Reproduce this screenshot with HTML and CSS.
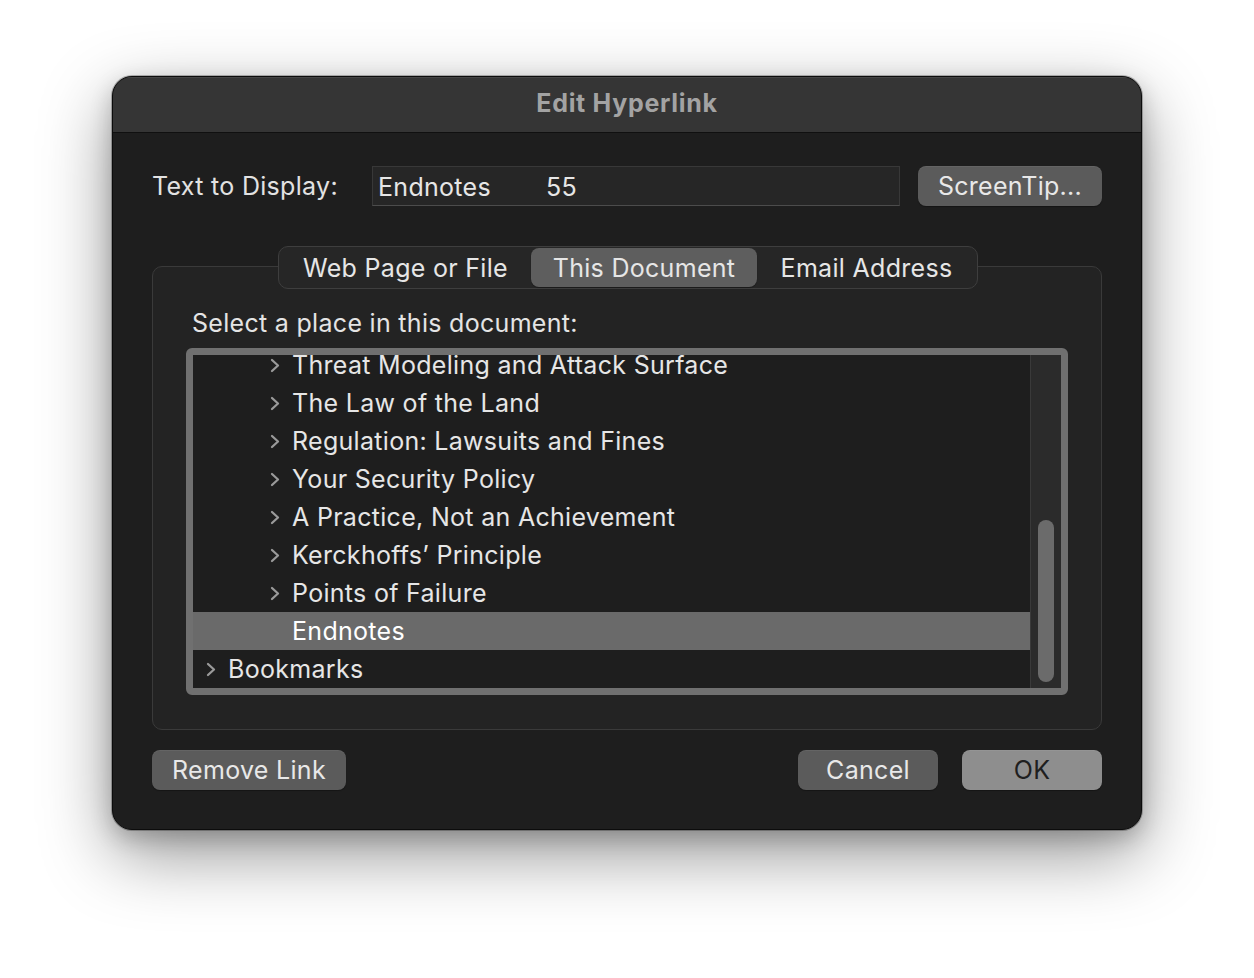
FILE: index.html
```html
<!DOCTYPE html>
<html lang="en">
<head>
<meta charset="utf-8">
<title>Edit Hyperlink</title>
<link rel="stylesheet" href="styles.css">
</head>
<body>
<div class="dialog">
  <div class="titlebar">Edit Hyperlink</div>
  <div class="content">
    <div class="display-row">
      <label class="display-label">Text to Display:</label>
      <div class="field"><span class="field-word">Endnotes</span><span class="field-num">55</span></div>
      <button class="btn screentip">ScreenTip...</button>
    </div>

    <div class="tabs">
      <div class="tab">Web Page or File</div>
      <div class="tab active">This Document</div>
      <div class="tab">Email Address</div>
    </div>

    <div class="group">
      <div class="group-label">Select a place in this document:</div>
      <div class="listbox">
        <div class="rows">
          <div class="rows-inner">
            <div class="row lvl1"><svg class="chev" viewBox="0 0 10 14"><polyline points="2,1.5 8,7 2,12.5"/></svg><span>Threat Modeling and Attack Surface</span></div>
            <div class="row lvl1"><svg class="chev" viewBox="0 0 10 14"><polyline points="2,1.5 8,7 2,12.5"/></svg><span>The Law of the Land</span></div>
            <div class="row lvl1"><svg class="chev" viewBox="0 0 10 14"><polyline points="2,1.5 8,7 2,12.5"/></svg><span>Regulation: Lawsuits and Fines</span></div>
            <div class="row lvl1"><svg class="chev" viewBox="0 0 10 14"><polyline points="2,1.5 8,7 2,12.5"/></svg><span>Your Security Policy</span></div>
            <div class="row lvl1"><svg class="chev" viewBox="0 0 10 14"><polyline points="2,1.5 8,7 2,12.5"/></svg><span>A Practice, Not an Achievement</span></div>
            <div class="row lvl1"><svg class="chev" viewBox="0 0 10 14"><polyline points="2,1.5 8,7 2,12.5"/></svg><span>Kerckhoffs’ Principle</span></div>
            <div class="row lvl1"><svg class="chev" viewBox="0 0 10 14"><polyline points="2,1.5 8,7 2,12.5"/></svg><span>Points of Failure</span></div>
            <div class="row lvl1 selected"><span class="chev-space"></span><span>Endnotes</span></div>
            <div class="row lvl0"><svg class="chev" viewBox="0 0 10 14"><polyline points="2,1.5 8,7 2,12.5"/></svg><span>Bookmarks</span></div>
          </div>
        </div>
        <div class="scrollbar"><div class="thumb"></div></div>
      </div>
    </div>

    <div class="footer">
      <button class="btn remove">Remove Link</button>
      <div class="footer-right">
        <button class="btn cancel">Cancel</button>
        <button class="btn ok">OK</button>
      </div>
    </div>
  </div>
</div>
</body>
</html>
```

FILE: styles.css
```css
* { box-sizing: border-box; }

html, body {
  margin: 0;
  background: #ffffff;
}

body {
  padding: 76px 0 0 112px;
  font-family: Inter, "Noto Sans", "Liberation Sans", sans-serif;
  font-size: 25px;
  letter-spacing: 0.3px;
  color: #e4e4e4;
  height: 978px;
  overflow: hidden;
}

.dialog {
  width: 1030px;
  height: 754px;
  background: #1e1e1e;
  border: 1px solid #0c0c0c;
  border-radius: 20px;
  overflow: hidden;
  box-shadow: 0 0 0 1px rgba(0,0,0,0.25), 0 24px 70px rgba(0,0,0,0.42), 0 8px 22px rgba(0,0,0,0.2);
  display: flex;
  flex-direction: column;
}

.titlebar {
  height: 56px;
  flex: none;
  background: #353535;
  border-bottom: 1px solid #101010;
  box-shadow: inset 0 1px 0 rgba(255,255,255,0.08);
  display: flex;
  align-items: center;
  justify-content: center;
  padding-bottom: 3px;
  font-size: 25px;
  font-weight: 700;
  color: #a3a3a3;
  letter-spacing: 0.7px;
}

.content {
  padding: 33px 39px 0 39px;
  display: flex;
  flex-direction: column;
}

.display-row {
  display: flex;
  align-items: center;
  height: 40px;
}

.display-label {
  width: 220px;
  color: #e2e2e2;
}

.field {
  width: 528px;
  height: 40px;
  background: #262626;
  border: 1px solid #383838;
  border-bottom-color: #4c4c4c;
  display: flex;
  align-items: center;
  padding-left: 5px;
  padding-top: 1px;
  color: #e6e6e6;
}

.field-word { width: 168px; }

.btn {
  font-family: inherit;
  font-size: 25px;
  letter-spacing: 0.3px;
  color: #e8e8e8;
  background: #5b5b5b;
  border: none;
  border-radius: 8px;
  height: 40px;
  padding: 0;
  box-shadow: 0 1px 1px rgba(0,0,0,0.3), inset 0 1px 0 rgba(255,255,255,0.06);
}

.screentip {
  margin-left: 18px;
  width: 184px;
}

.tabs {
  margin-top: 40px;
  align-self: center;
  position: relative;
  z-index: 1;
  height: 43px;
  width: 700px;
  margin-left: 2px;
  display: flex;
  align-items: center;
  padding: 0 1px;
  background: #262626;
  border: 1px solid #3e3e3e;
  border-radius: 10px;
}

.tab {
  height: 39px;
  display: flex;
  align-items: center;
  justify-content: center;
  color: #e6e6e6;
  border-radius: 8px;
}

.tab:nth-child(1) { width: 251px; }
.tab:nth-child(2) { width: 226px; }
.tab:nth-child(3) { flex: 1; }

.tab.active {
  background: #5e5e5e;
  box-shadow: 0 1px 1px rgba(0,0,0,0.3);
}

.group {
  margin-top: -23px;
  height: 464px;
  background: #232323;
  border: 1px solid #3a3a3a;
  border-radius: 10px;
  padding: 43px 33px 0 33px;
  display: flex;
  flex-direction: column;
}

.group-label {
  padding-left: 6px;
  height: 26px;
  line-height: 26px;
  color: #e4e4e4;
}

.listbox {
  margin-top: 12px;
  height: 347px;
  border: 7px solid #707070;
  border-radius: 6px;
  background: #1e1e1e;
  display: flex;
  overflow: hidden;
}

.rows {
  flex: 1;
  overflow: hidden;
}

.rows-inner {
  margin-top: -9px;
}

.row {
  height: 38px;
  display: flex;
  align-items: center;
  color: #e6e6e6;
  white-space: nowrap;
}

.row.lvl0 { padding-left: 13px; }
.row.lvl1 { padding-left: 77px; }

.row.selected {
  background: #6a6a6a;
  color: #ffffff;
}

.chev, .chev-space {
  width: 10px;
  height: 15px;
  margin-right: 12px;
  flex: none;
}

.chev polyline {
  fill: none;
  stroke: #9a9a9a;
  stroke-width: 2.3;
  stroke-linecap: round;
  stroke-linejoin: round;
}

.scrollbar {
  width: 31px;
  flex: none;
  background: #2b2b2b;
  border-left: 1px solid #3a3a3a;
  display: flex;
  flex-direction: column;
  justify-content: flex-end;
  padding: 0 7px 6px 7px;
}

.thumb {
  height: 162px;
  background: #6b6b6b;
  border-radius: 8px;
}

.footer {
  margin-top: 20px;
  display: flex;
  justify-content: space-between;
}

.footer-right {
  display: flex;
  gap: 24px;
}

.remove { width: 194px; }
.cancel { width: 140px; }
.ok {
  width: 140px;
  background: #8e8e8e;
  color: #1f1f1f;
}
```
